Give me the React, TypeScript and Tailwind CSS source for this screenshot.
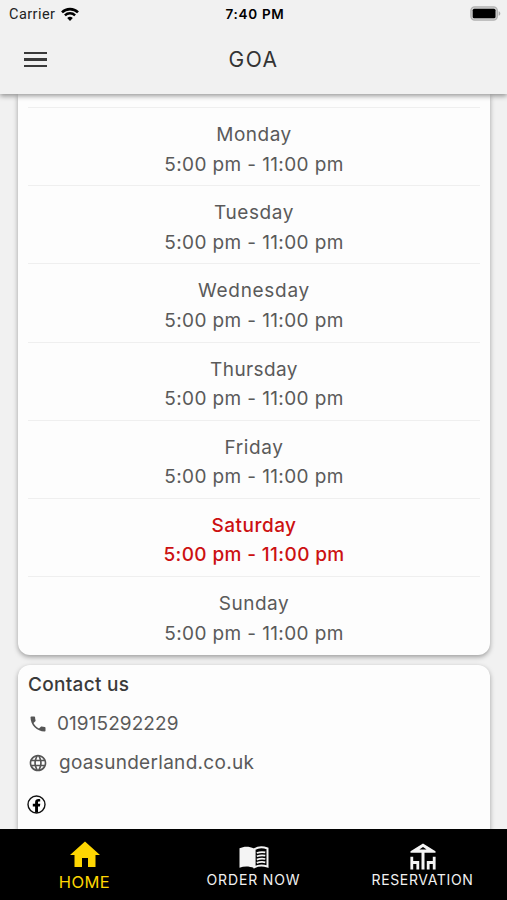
import { MdHome, MdLanguage, MdPhone } from "react-icons/md";
import clsx from "clsx";

const HOURS = "5:00 pm - 11:00 pm";

const DAYS = [
  { name: "Monday", spacing: "tracking-[0.5px]" },
  { name: "Tuesday", spacing: "tracking-[0.6px]" },
  { name: "Wednesday", spacing: "tracking-[0.7px]" },
  { name: "Thursday", spacing: "tracking-[0.4px]" },
  { name: "Friday", spacing: "tracking-[0.6px]" },
  { name: "Saturday", spacing: "tracking-[0.5px]", today: true },
  { name: "Sunday", spacing: "tracking-[0.5px]" },
];

function WifiIcon() {
  return (
    <svg className="w-[18px] h-[14px]" viewBox="0 0 18 14">
      <path d="M1 5.4a11.3 11.3 0 0 1 16 0" fill="none" stroke="#000" strokeWidth="2.6" />
      <path d="M3.9 8.4a7.2 7.2 0 0 1 10.2 0" fill="none" stroke="#000" strokeWidth="2.4" />
      <path d="M9 13.9 6.2 11.1a4 4 0 0 1 5.6 0z" fill="#000" />
    </svg>
  );
}

function BatteryIcon() {
  return (
    <svg className="-mt-[2px] w-[31px] h-[15px]" viewBox="0 0 31 15">
      <rect x="0.9" y="0.9" width="26.4" height="13.2" rx="3.8" fill="#d0d0d0" stroke="#b0b0b0" strokeWidth="1.3" />
      <rect x="2.7" y="2.7" width="22.8" height="9.6" rx="1.6" fill="#000" />
      <path d="M28.6 5.2v4.6c1-.4 1.7-1.2 1.7-2.3s-.7-1.9-1.7-2.3z" fill="#a9a9a9" />
    </svg>
  );
}

function FacebookIcon() {
  return (
    <svg className="-ml-px w-[19px] h-[19px]" viewBox="0 0 19 19">
      <circle cx="9.5" cy="9.5" r="8.5" fill="none" stroke="#111" strokeWidth="1.4" />
      <path d="M8.1 17.6v-6.1H5.800V8.700h2.300V7.300c0-2.200 1.400-3.200 3.400-3.200.6 0 1.200.1 1.700.1v2.300H12c-.8 0-1 .4-1 1v1.200h2.300l-.4 2.800H11v6.100z" fill="#000" />
    </svg>
  );
}

function MenuBookIcon() {
  return (
    <svg className="w-[30px] h-[23px]" viewBox="0 0 30 23">
      <path d="M.5 2.2C5 .1 10.200.1 15 2.400V22C10.200 20 5 20 .5 21.700z" fill="#f4f4f4" />
      <path
        d="M15.600 3.100C19.400.9 24 .9 28.500 2.500V20.600C24 19.200 19.400 19.300 15.600 21.100z"
        fill="none"
        stroke="#f4f4f4"
        strokeWidth="2"
      />
      <path
        d="M17.800 7c2.700-1 5.500-1.200 8.500-.6M17.800 10.300c2.700-1 5.500-1.200 8.500-.6M17.800 13.600c2.700-1 5.500-1.200 8.500-.6M17.800 16.900c2.700-1 5.500-1.200 8.500-.6"
        fill="none"
        stroke="#f4f4f4"
        strokeWidth="1.700"
      />
    </svg>
  );
}

function TableIcon() {
  return (
    <svg className="w-[26px] h-[27px]" viewBox="0 0 26 27" fill="none" stroke="#f4f4f4">
      <path d="M13 .5 25.500 8.300v1.400H.5V8.300zM13 4 9.400 6.400h7.200z" fill="#f4f4f4" fillRule="evenodd" stroke="none" />
      <path d="M13 8v18.500" strokeWidth="3" />
      <path d="M1.800 13.700v12.800M1.800 19.500h6v7" strokeWidth="2.800" />
      <path d="M24.200 13.700v12.800M24.200 19.500h-6v7" strokeWidth="2.800" />
    </svg>
  );
}

function Header() {
  return (
    <header className="relative z-10 h-[94px] shrink-0 bg-[#f1f1f1] shadow-[0_2px_5px_rgba(0,0,0,0.4)]">
      <div className="grid h-7 grid-cols-3 items-center pl-[9px] pr-[6px]">
        <div className="-mt-px flex items-center gap-[6px]">
          <span className="mt-[2px] font-['Roboto',sans-serif] text-[14.500px] leading-5 tracking-[0.450px] text-[#222]">
            Carrier
          </span>
          <WifiIcon />
        </div>
        <span className="text-center whitespace-nowrap text-[13.500px] leading-5 font-semibold tracking-[0.700px] text-black">
          7:40 PM
        </span>
        <div className="flex justify-end">
          <BatteryIcon />
        </div>
      </div>
      <div className="grid h-[63px] grid-cols-3 items-center px-6">
        <button className="flex w-[23px] flex-col gap-[4px]" aria-label="Menu">
          <span className="h-[2.500px] w-full bg-[#3a3a3a]" />
          <span className="h-[2.500px] w-full bg-[#3a3a3a]" />
          <span className="h-[2.500px] w-full bg-[#3a3a3a]" />
        </button>
        <h1 className="text-center text-[21px] font-normal tracking-[1.500px] text-[#333]">GOA</h1>
      </div>
    </header>
  );
}

function OpeningHours() {
  return (
    <section className="h-[561px] shrink-0 rounded-b-[12px] bg-[#fdfdfd] px-[10px] pt-[13px] shadow-[0_2px_5px_rgba(0,0,0,0.35)]">
      {DAYS.map((day) => (
        <div
          key={day.name}
          className={clsx(
            "h-[78.200px] border-t border-[#efefef] pt-[12px] text-center text-[19px] leading-[29.500px]",
            day.today ? "font-medium text-[#cc1111]" : "text-[#5a5a5a]"
          )}
        >
          <p className={day.spacing}>{day.name}</p>
          <p className="tracking-[0.380px]">{HOURS}</p>
        </div>
      ))}
    </section>
  );
}

function ContactCard() {
  return (
    <section className="mt-[10px] h-[200px] shrink-0 rounded-[12px] bg-[#fdfdfd] px-[10px] pt-[5px] text-[19px] text-[#5a5a5a] shadow-[0_2px_5px_rgba(0,0,0,0.35)]">
      <h2 className="h-[29px] font-medium leading-[29px] tracking-[0.300px] text-[#3a3a3a]">Contact us</h2>
      <div className="mt-[5px] flex h-[39px] items-center">
        <MdPhone className="h-5 w-5 text-[#555]" />
        <span className="ml-[9px] mt-[2px] tracking-[0.080px]">01915292229</span>
      </div>
      <div className="flex h-[39px] items-center">
        <MdLanguage className="h-5 w-5 text-[#555]" />
        <span className="ml-[11px] mt-[2px] tracking-[0.300px]">goasunderland.co.uk</span>
      </div>
      <div className="flex h-[44px] items-center">
        <FacebookIcon />
      </div>
    </section>
  );
}

function TabBar() {
  return (
    <nav className="relative z-10 grid h-[71px] shrink-0 grid-cols-3 bg-black text-[14px] text-[#f1f1f1]">
      <div className="flex flex-col items-center pt-[8px] text-[#fed602]">
        <MdHome className="h-9 w-9" />
        <span className="-mt-[1px] text-[16.500px] leading-[20px] tracking-[0.400px]">HOME</span>
      </div>
      <div className="flex flex-col items-center pt-[17px]">
        <MenuBookIcon />
        <span className="mt-[1px] leading-[20px] tracking-[0.850px]">ORDER NOW</span>
      </div>
      <div className="flex flex-col items-center pt-[14px]">
        <TableIcon />
        <span className="leading-[20px] tracking-[0.650px]">RESERVATION</span>
      </div>
    </nav>
  );
}

export default function App() {
  return (
    <div className="flex h-[900px] w-[507px] flex-col overflow-hidden bg-[#f1f1f1] font-['Inter',sans-serif]">
      <Header />
      <main className="flex min-h-0 flex-1 flex-col overflow-hidden pl-[18px] pr-[17px]">
        <OpeningHours />
        <ContactCard />
      </main>
      <TabBar />
    </div>
  );
}
